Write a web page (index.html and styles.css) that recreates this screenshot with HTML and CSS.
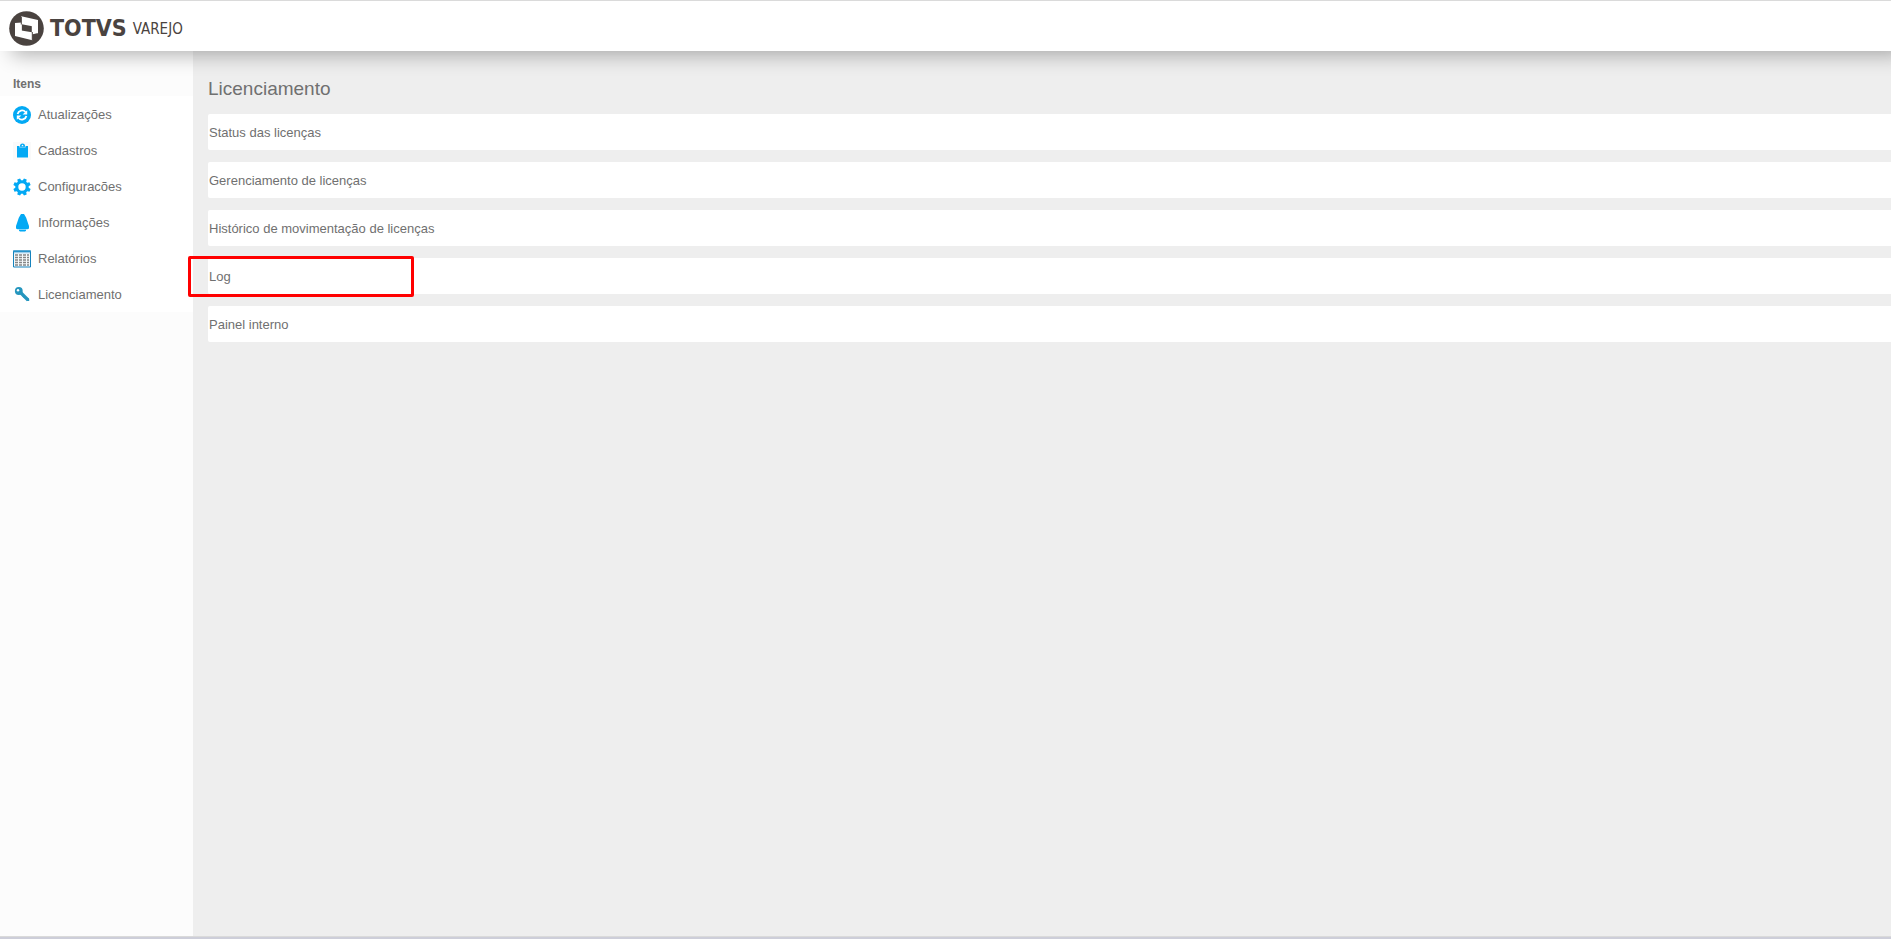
FILE: index.html
```html
<!DOCTYPE html>
<html lang="pt-BR">
<head>
<meta charset="utf-8">
<title>TOTVS Varejo - Licenciamento</title>
<link rel="stylesheet" href="styles.css">
</head>
<body>
<header class="topbar">
  <a class="brand" href="#">
    <svg class="brand-mark" viewBox="0 0 35 35" aria-hidden="true">
      <circle cx="17.5" cy="17.5" r="17.3" fill="#4a4340"/>
      <path fill="#fff" fill-rule="evenodd" d="M12.300 5.300 29 9V22.300L12.300 19.600zM6 12 23.300 15.200V29.300L6 25z"/>
      <path fill="#fff" d="M6 12 12.800 11.500V20H6zM22.800 14H29v8l-6.200 1.500z"/>
      <path fill="none" stroke="#4a4340" stroke-width="1" d="M12.300 6v7.500M23.300 21v8"/>
    </svg>
    <span class="brand-name">TOTVS</span>
    <span class="brand-unit">VAREJO</span>
  </a>
</header>
<div class="layout">
  <nav class="sidebar" aria-labelledby="nav-title">
    <h2 class="sidebar-title" id="nav-title">Itens</h2>
    <ul class="menu">
      <li><a class="menu-link" href="#">
        <svg class="menu-icon" viewBox="0 0 18 18" aria-hidden="true"><circle cx="9" cy="9" r="9" fill="#03a9f4"/><g fill="none" stroke="#fff" stroke-width="1.800"><path d="M4.600 8A4.600 4.600 0 0 1 12.500 6M13.400 10A4.600 4.600 0 0 1 5.500 12"/></g><path fill="#fff" d="M14.200 4.200V8.600H9.600zM3.800 13.800V9.400h4.600z"/></svg>
        Atualizações</a></li>
      <li><a class="menu-link" href="#">
        <svg class="menu-icon" viewBox="0 0 18 18" aria-hidden="true"><path fill="#fafafa" d="M0 0h18v18H0z"/><path fill="#03a9f4" d="M4 4h3a2.500 2.500 0 0 1 5 0h3v11.500H4z"/><path fill="none" stroke="#fafafa" stroke-width=".5" d="M6.500 4v1.200h6V4"/><circle cx="9.500" cy="3.500" r=".8" fill="#fafafa"/></svg>
        Cadastros</a></li>
      <li><a class="menu-link" href="#">
        <svg class="menu-icon" viewBox="0 0 18 18" aria-hidden="true"><circle cx="9" cy="9" r="5.200" fill="none" stroke="#03a9f4" stroke-width="3"/><g fill="#03a9f4"><path id="tooth" d="M7 3.500 7.500 .3h3l.5 3.200z" transform="rotate(22.500 9 9)"/><use href="#tooth" transform="rotate(45 9 9)"/><use href="#tooth" transform="rotate(90 9 9)"/><use href="#tooth" transform="rotate(135 9 9)"/><use href="#tooth" transform="rotate(180 9 9)"/><use href="#tooth" transform="rotate(225 9 9)"/><use href="#tooth" transform="rotate(270 9 9)"/><use href="#tooth" transform="rotate(315 9 9)"/></g></svg>
        Configuracões</a></li>
      <li><a class="menu-link" href="#">
        <svg class="menu-icon" viewBox="0 0 18 18" aria-hidden="true"><path fill="#03a9f4" d="M8 0h3l.9 1.500C14 4.500 14.300 8 16 12v2.500l-1.500.8h-10L3 14.500V12C4.700 8 5 4.500 7.100 1.500zM6 15.800h7v1L12 17.500H7l-1-.7z"/></svg>
        Informações</a></li>
      <li><a class="menu-link" href="#">
        <svg class="menu-icon" viewBox="0 0 18 18" aria-hidden="true"><path fill="#f7fafb" stroke="#1683bd" d="M.5 1h17v16H.5z"/><path fill="#2793ca" d="M0 .5h18V2H0z"/><path fill="#9dcdea" d="M1 2h16v1.300H1z"/><g fill="none" stroke="#858585" stroke-width="1.300" stroke-dasharray="3 1"><path d="M2 5h14M2 7.500h14M2 10h14M2 12.500h14M2 15h14"/></g></svg>
        Relatórios</a></li>
      <li><a class="menu-link" href="#">
        <svg class="menu-icon" viewBox="0 0 18 18" aria-hidden="true"><circle cx="5.800" cy="5" r="3.900" fill="#2596be"/><path stroke="#2596be" stroke-width="3.200" d="m7 6 8 8"/><path fill="#2596be" d="m9 10 1.500 1.800.8-.5.700 1.800 1-.5 1.200 2.400h2V13l-1-1z"/><circle cx="5" cy="4.200" r="1.200" fill="#fff"/></svg>
        Licenciamento</a></li>
    </ul>
  </nav>
  <main class="content">
    <h1 class="page-title">Licenciamento</h1>
    <ul class="options">
      <li><a class="option" href="#">Status das licenças</a></li>
      <li><a class="option" href="#">Gerenciamento de licenças</a></li>
      <li><a class="option" href="#">Histórico de movimentação de licenças</a></li>
      <li class="highlighted"><a class="option" href="#">Log</a></li>
      <li><a class="option" href="#">Painel interno</a></li>
    </ul>
  </main>
</div>
<footer class="bottom-edge"></footer>
</body>
</html>
```
FILE: styles.css
```css
*,
*::after {
  box-sizing: border-box;
}

body {
  margin: 0;
  min-height: 100vh;
  display: flex;
  flex-direction: column;
  overflow-x: hidden;
  background: #eee;
  color: #707070;
  font: 13px/16px "Liberation Sans", Arial, sans-serif;
}

ul {
  list-style: none;
  margin: 0;
  padding: 0;
}

a {
  color: inherit;
  text-decoration: none;
}

.topbar {
  position: relative;
  z-index: 1;
  padding: 10px 9px 5px;
  border-top: 1px solid #dadada;
  background: #fff;
  box-shadow: 12px 4px 20px rgba(0, 0, 0, 0.3);
}

.brand {
  display: flex;
  align-items: center;
  gap: 6px;
  width: max-content;
  color: #4a4340;
  font-family: "DejaVu Sans Condensed", "DejaVu Sans", sans-serif;
}

.brand-mark {
  width: 35px;
  height: 35px;
}

.brand-name {
  font-size: 23px;
  font-weight: bold;
  line-height: 35px;
}

.brand-unit {
  font-size: 15px;
}

.layout {
  flex: 1;
  display: flex;
}

.sidebar {
  width: 193px;
  flex: none;
  background: #fcfcfc;
}

.sidebar-title {
  margin: 0;
  padding: 25px 13px 4px;
  font-size: 12px;
  line-height: 16px;
}

.menu {
  background: #fff;
}

.menu-link {
  display: flex;
  align-items: center;
  gap: 7px;
  height: 36px;
  padding: 2px 13px 0;
}

.menu-icon {
  width: 18px;
  height: 18px;
}

.content {
  flex: 1;
  padding: 26px 0 0 15px;
}

.page-title {
  margin: 0 0 13px;
  font-size: 19px;
  font-weight: normal;
  line-height: 24px;
}

.options {
  display: grid;
  gap: 12px;
}

.option {
  display: block;
  padding: 11px 1px 9px;
  border-radius: 2px 0 0 2px;
  background: #fff;
}

.highlighted {
  position: relative;
}

.highlighted::after {
  content: "";
  position: absolute;
  top: -2px;
  left: -20px;
  width: 226px;
  height: 41px;
  border: 3px solid #f00;
  border-radius: 2px;
  pointer-events: none;
}

.bottom-edge {
  height: 3px;
  border-top: 1px solid #dadada;
  background: #cdced9;
}
```
